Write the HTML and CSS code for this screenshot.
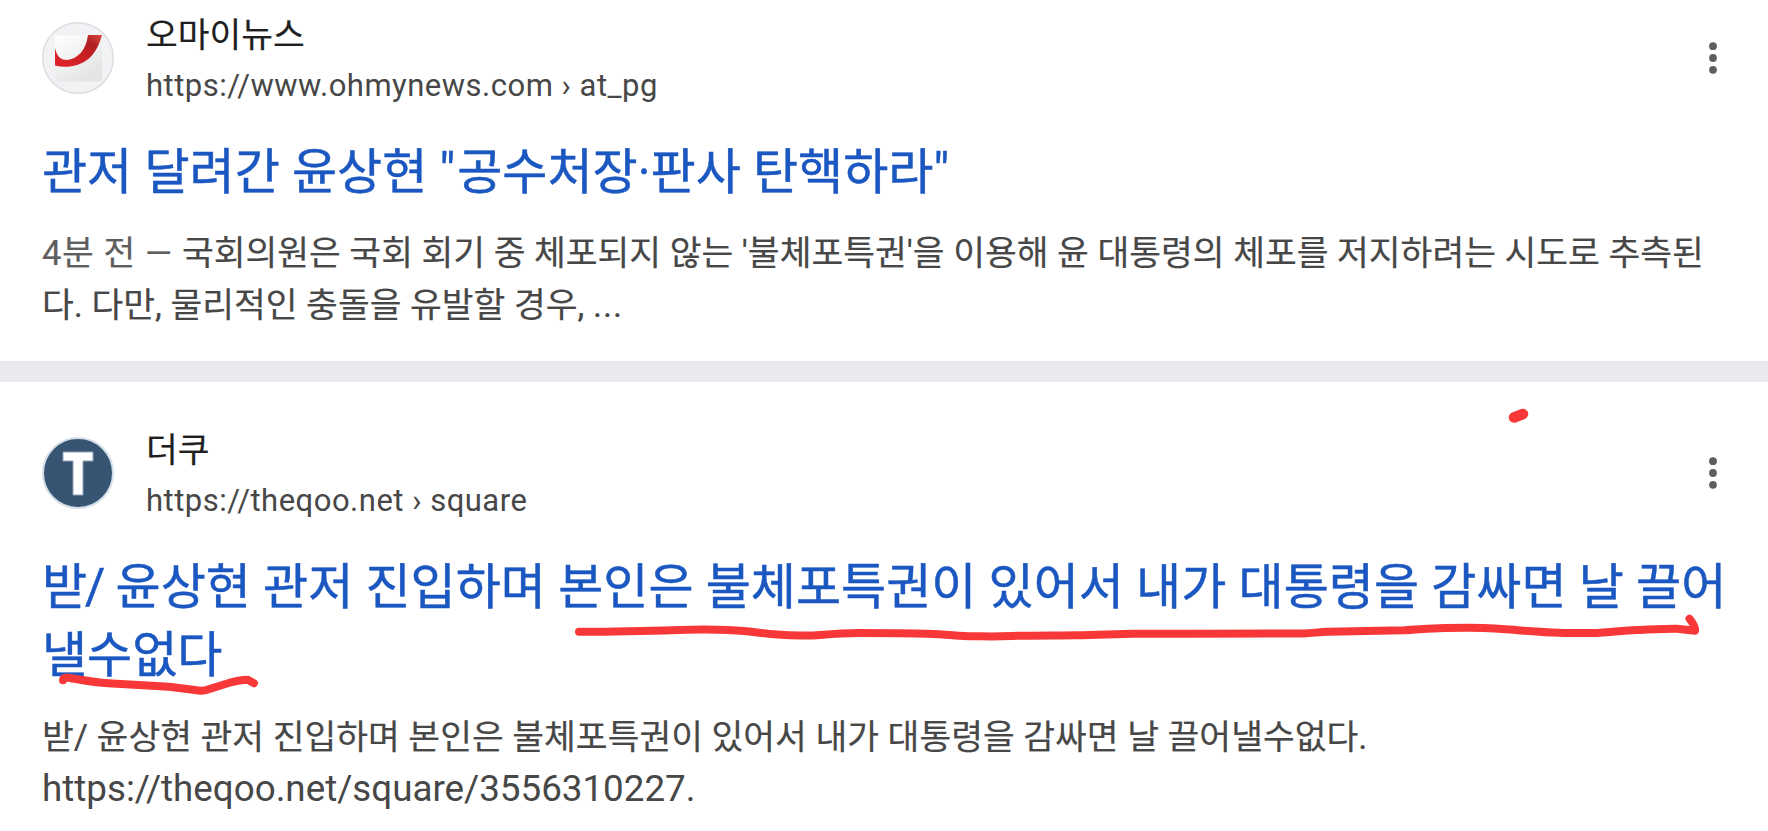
FILE: index.html
```html
<!DOCTYPE html>
<html lang="ko">

<head>
    <meta charset="UTF-8">
    <meta name="viewport" content="width=device-width, initial-scale=1.0">
    <title>윤상현 관저</title>
    <link rel="stylesheet" href="styles.css">
</head>

<body>
    <main class="results">
        <!-- OhmyNews -->
        <article class="result">
            <header class="source">
                <svg class="favicon" viewBox="0 0 72 72">
                    <defs>
                        <linearGradient id="paper" x1="0" y1="0" x2="0.6" y2="1">
                            <stop offset="0" stop-color="#ffffff" />
                            <stop offset="1" stop-color="#e3e4e6" />
                        </linearGradient>
                        <linearGradient id="swoosh" x1="0" y1="1" x2="1" y2="0">
                            <stop offset="0" stop-color="#e0242b" />
                            <stop offset="0.5" stop-color="#c91f24" />
                            <stop offset="0.75" stop-color="#b02022" />
                            <stop offset="1" stop-color="#de4a44" />
                        </linearGradient>
                    </defs>
                    <circle cx="36" cy="36" r="35.3" fill="#f1f2f4" stroke="#dadce0" stroke-width="1.4" />
                    <rect x="13" y="13.5" width="47" height="46" fill="url(#paper)" />
                    <path d="M13 26C15 35 19 38 25 38C35 37 44 29 46 13H60C57 24 52 33 45 38C37 44 25 46.5 13 43.5Z" fill="url(#swoosh)" />
                </svg>
                <div class="site">
                    <div class="site-name">오마이뉴스</div>
                    <div class="site-url">https://www.ohmynews.com › at_pg</div>
                </div>
                <svg class="menu" viewBox="0 0 8 32">
                    <circle cx="4" cy="4.2" r="3.9" />
                    <circle cx="4" cy="16" r="3.9" />
                    <circle cx="4" cy="27.8" r="3.9" />
                </svg>
            </header>
            <h3 class="title">관저 달려간 윤상현 <span class="quote">"</span>공수처장·판사 탄핵하라"</h3>
            <p class="snippet"><span class="date">4분 전 — </span>국회의원은 국회 회기 중 체포되지 않는 '불체포특권'을 이용해 윤 대통령의 체포를 저지하려는 시도로 추측된<br>다. 다만, 물리적인 충돌을 유발할 경우, <span class="more">...</span></p>
        </article>

        <!-- theqoo -->
        <article class="result">
            <header class="source">
                <svg class="favicon" viewBox="0 0 72 72">
                    <circle cx="36" cy="36" r="35" fill="#375473" stroke="#d5dfea" stroke-width="2" />
                    <path d="M21 15H51V24H41V58H31V24H21Z" fill="#fff" stroke="#8fa2b8" stroke-width="1" />
                </svg>
                <div class="site">
                    <div class="site-name">더쿠</div>
                    <div class="site-url">https://theqoo.net › square</div>
                </div>
                <svg class="menu" viewBox="0 0 8 32">
                    <circle cx="4" cy="4.2" r="3.9" />
                    <circle cx="4" cy="16" r="3.9" />
                    <circle cx="4" cy="27.8" r="3.9" />
                </svg>
            </header>
            <h3 class="title"><span class="lead">받/</span> 윤상현 관저 진입하며 본인은 불체포특권이 있어서 내가 대통령을 감싸면 날 끌어<br>낼수없다</h3>
            <p class="snippet">받/ 윤상현 관저 진입하며 본인은 불체포특권이 있어서 내가 대통령을 감싸면 날 끌어낼수없다.<br><span class="link">https://theqoo.net/square/3556310227.</span></p>
        </article>
    </main>

    <!-- Red pen marks over the second result -->
    <svg class="pen" viewBox="0 0 1768 831">
        <path class="dot" d="M1514 417.5L1523 414" />
        <path d="M579 631.7C604 632 628 631 652 630.7S690 629.3 705 629.5S732 630 744 631S772 635 790 635.3S808 636 820 635S845 633 858 633S905 633 927 633.7S958 636 973 636.2S994 636.7 1012 636S1055 635.6 1077 635.3S1115 634 1134 633.8H1192L1304 633.5C1313 633.3 1318 632 1328 631.7L1404 630.3C1418 629.6 1430 628.2 1444 628S1470 627.6 1484 628S1510 629.8 1524 630.7S1550 633 1564 633S1588 633.4 1600 632.7S1624 630.5 1637 630S1664 628.6 1677 628.7L1695 630.8Q1696 627 1689.5 618.7" />
        <path d="M63 680.2C63 677.5 66 677.2 70 678C82 680 95 682.5 108 683.3L169 686.7L195 690Q203 691.5 208 689.5L227 683.5Q239 680 247.7 679.8L254 683.2" />
    </svg>
</body>

</html>
```

FILE: styles.css
```css
body {
    margin: 0;
    overflow: hidden;
    background-color: #fff;
    font-family: Roboto, "Noto Sans CJK KR", sans-serif;
    color: #474747;
}

.results {
    display: flex;
    flex-direction: column;
    gap: 21px;
    height: 831px;
    background-color: #e8eaed; /* shows through as the divider */
}

.result {
    padding: 41px 42px 0;
    background-color: #fff;
    white-space: nowrap;
}

.result:first-child {
    height: 361px;
    padding-top: 8px;
    box-sizing: border-box;
}

.result:last-child {
    flex: 1;
}

.source {
    display: flex;
    align-items: center;
    height: 100px;
}

.favicon {
    width: 72px;
    height: 72px;
    margin-right: 32px;
}

.site {
    flex: 1;
    padding-top: 4px;
}

.site-name {
    font-size: 34.5px;
    line-height: 52px;
    color: #1f1f1f;
    -webkit-text-stroke: 0.2px;
}

.site-url {
    font-size: 31px;
    line-height: 50px;
    letter-spacing: 0.5px;
    color: #474747;
}

.menu {
    width: 8px;
    height: 32px;
    margin-right: 9px;
    fill: #5e5e5e;
}

.title {
    margin: 29.5px 0 0;
    font-size: 49.05px;
    font-weight: 400;
    line-height: 68.5px;
    color: #1b57c0;
    -webkit-text-stroke: 0.5px;
}

.quote {
    letter-spacing: 2px;
}

.lead {
    letter-spacing: -2px;
}

.snippet {
    margin: 21px 0 0;
    font-size: 34.55px;
    line-height: 52.4px;
    -webkit-text-stroke: 0.2px;
}

.date {
    letter-spacing: 0.6px;
    color: #5e5e5e;
}

.more {
    letter-spacing: 1px;
}

.link {
    font-size: 36.75px;
    -webkit-text-stroke: 0;
}

/* Pen marks */
.pen {
    position: absolute;
    top: 0;
    left: 0;
    width: 1768px;
    height: 831px;
    fill: none;
    stroke: #f83838;
    stroke-width: 8;
    stroke-linecap: round;
    stroke-linejoin: round;
    pointer-events: none;
}

.dot {
    stroke-width: 10.5;
}
```
